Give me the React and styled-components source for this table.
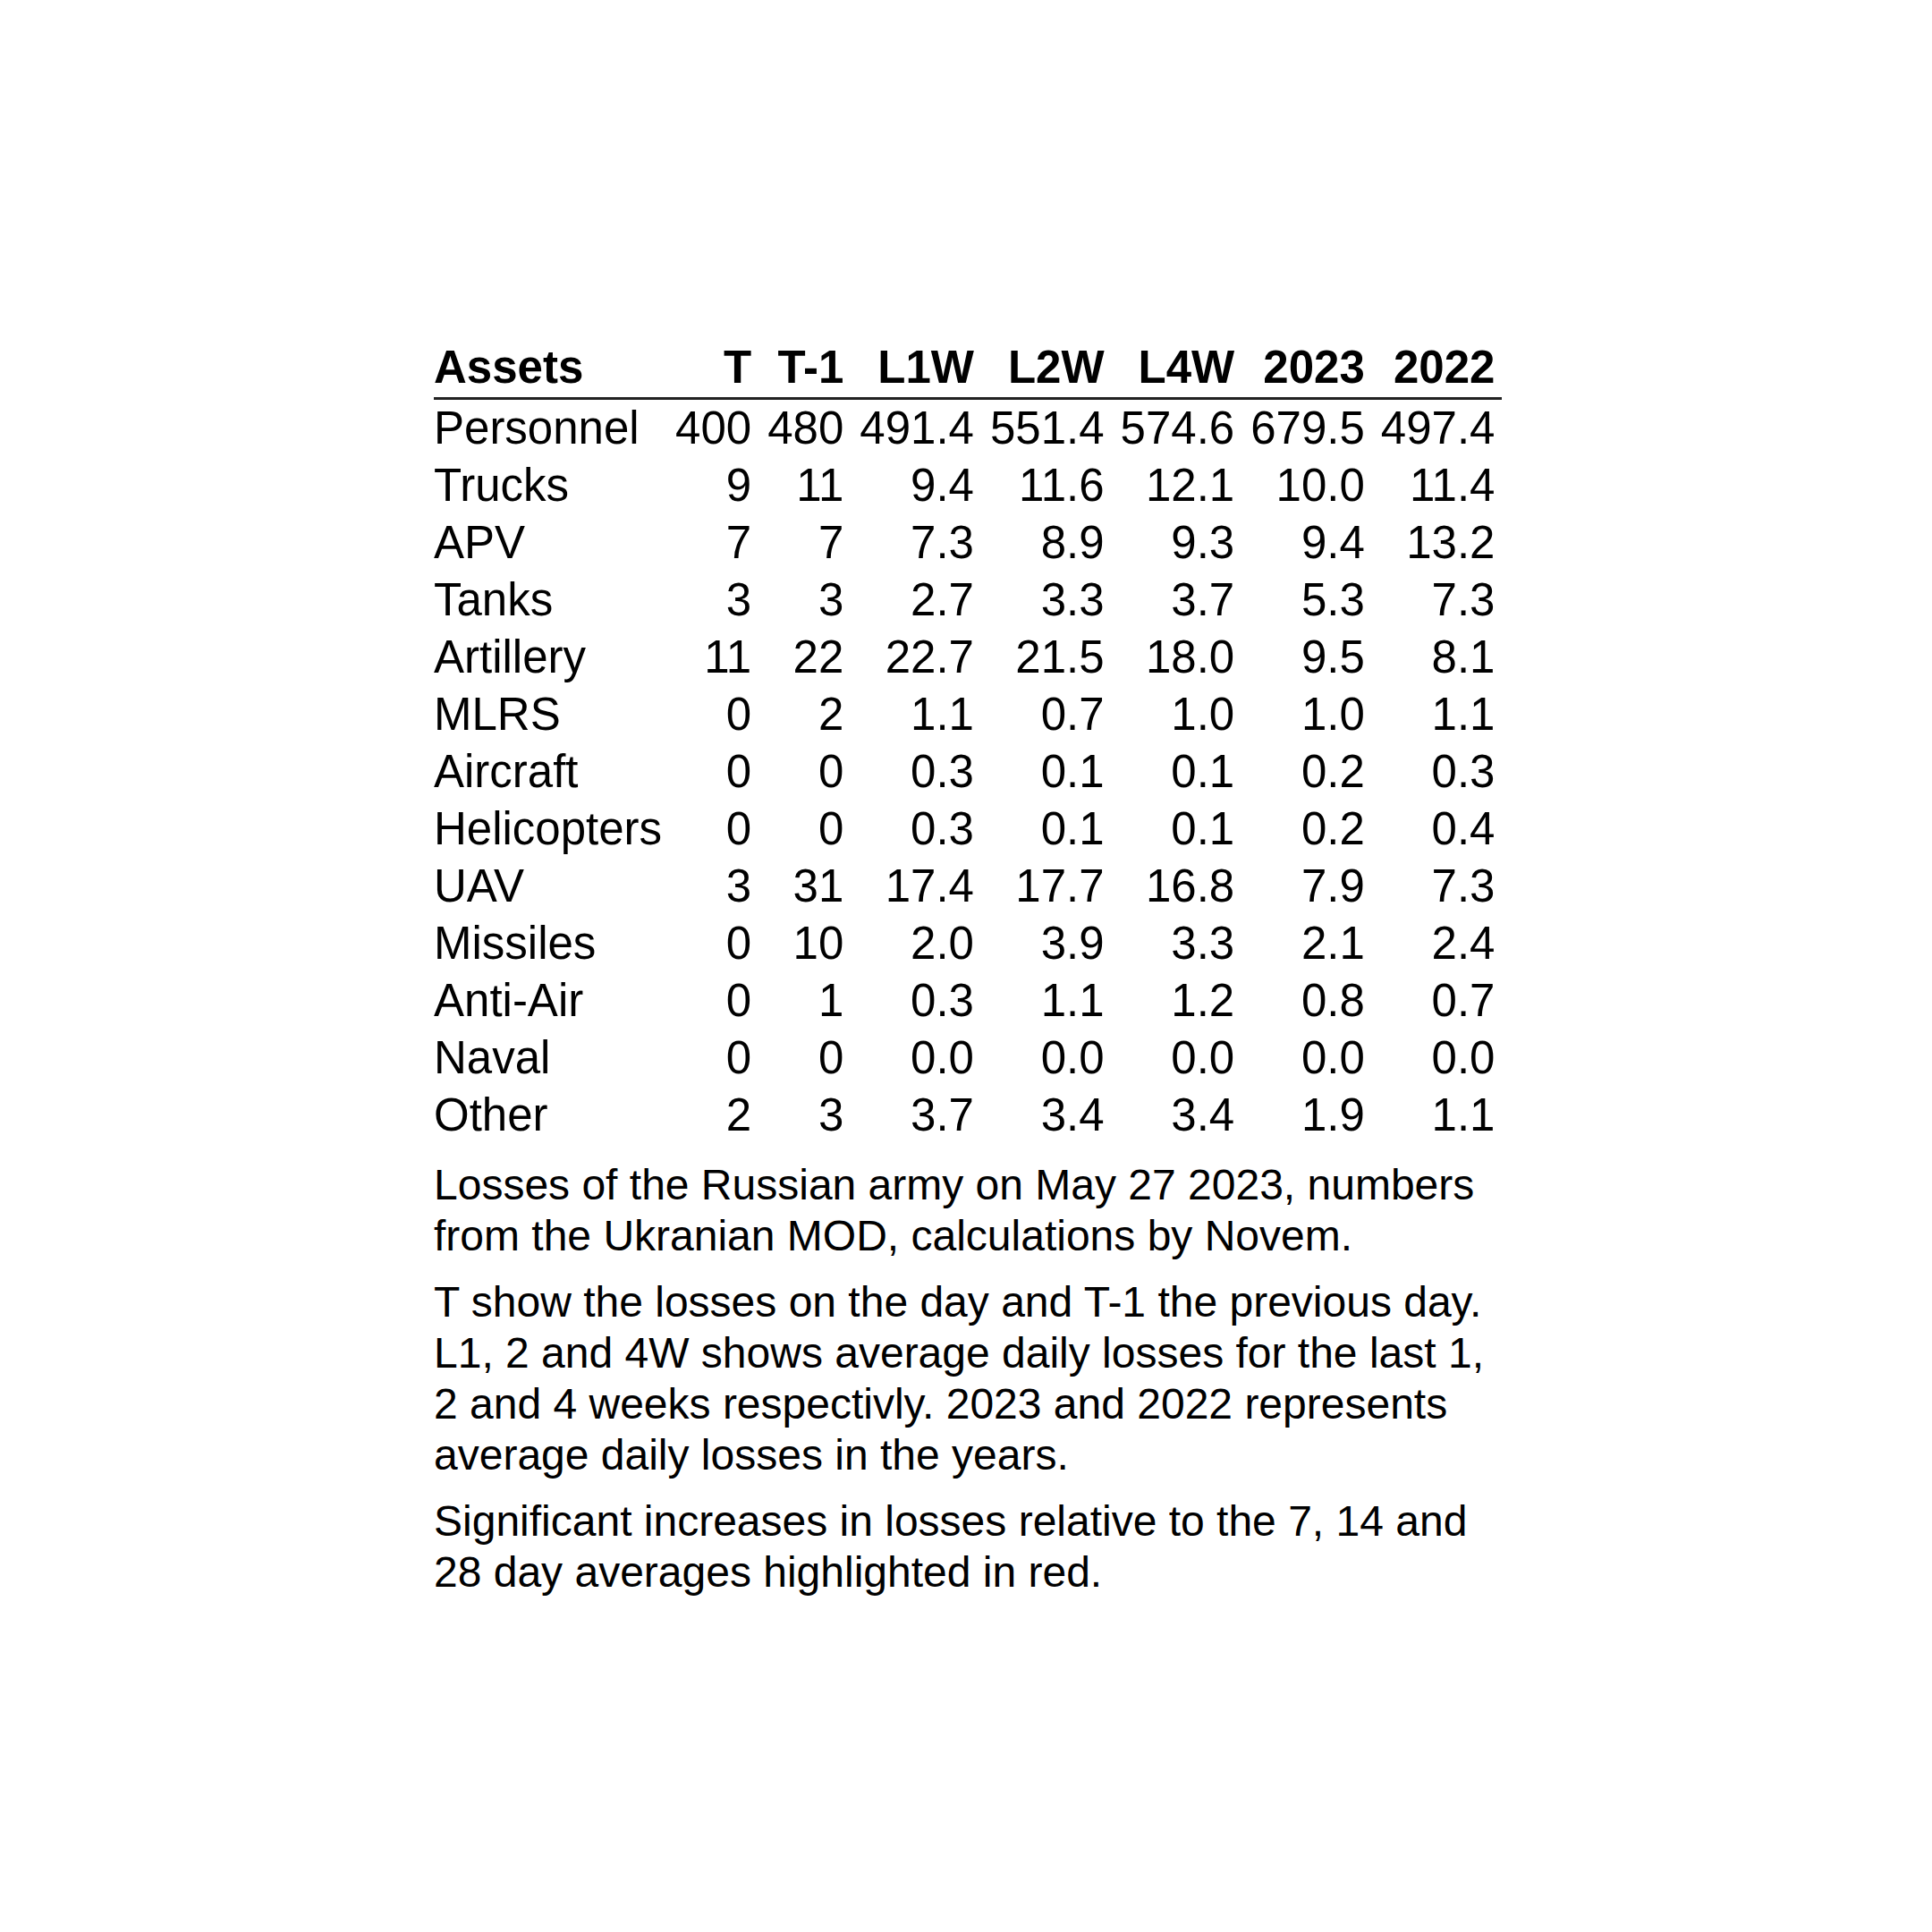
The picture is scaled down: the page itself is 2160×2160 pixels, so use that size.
import styled, { createGlobalStyle } from "styled-components";

const GlobalStyle = createGlobalStyle`
    html, body {
        margin: 0;
        padding: 0;
        background: #ffffff;
    }
    body {
        font-family: "Liberation Sans", Arial, sans-serif;
        color: #000000;
    }
`;

const columns = ["T", "T-1", "L1W", "L2W", "L4W", "2023", "2022"];

const rows = [
    ["Personnel", "400", "480", "491.4", "551.4", "574.6", "679.5", "497.4"],
    ["Trucks", "9", "11", "9.4", "11.6", "12.1", "10.0", "11.4"],
    ["APV", "7", "7", "7.3", "8.9", "9.3", "9.4", "13.2"],
    ["Tanks", "3", "3", "2.7", "3.3", "3.7", "5.3", "7.3"],
    ["Artillery", "11", "22", "22.7", "21.5", "18.0", "9.5", "8.1"],
    ["MLRS", "0", "2", "1.1", "0.7", "1.0", "1.0", "1.1"],
    ["Aircraft", "0", "0", "0.3", "0.1", "0.1", "0.2", "0.3"],
    ["Helicopters", "0", "0", "0.3", "0.1", "0.1", "0.2", "0.4"],
    ["UAV", "3", "31", "17.4", "17.7", "16.8", "7.9", "7.3"],
    ["Missiles", "0", "10", "2.0", "3.9", "3.3", "2.1", "2.4"],
    ["Anti-Air", "0", "1", "0.3", "1.1", "1.2", "0.8", "0.7"],
    ["Naval", "0", "0", "0.0", "0.0", "0.0", "0.0", "0.0"],
    ["Other", "2", "3", "3.7", "3.4", "3.4", "1.9", "1.1"],
];

function App() {
    return (
        <Page>
            <GlobalStyle />
            <Figure>
                <Table>
                    <thead>
                        <tr>
                            <HeadCell $label>Assets</HeadCell>
                            {columns.map(col => (
                                <HeadCell key={col}>{col}</HeadCell>
                            ))}
                        </tr>
                    </thead>
                    <tbody>
                        {rows.map(row => (
                            <tr key={row[0]}>
                                {row.map((value, index) => (
                                    <Cell key={index} $label={index === 0}>
                                        {value}
                                    </Cell>
                                ))}
                            </tr>
                        ))}
                    </tbody>
                </Table>
                <Notes>
                    <Note>
                        Losses of the Russian army on May 27 2023, numbers<br />
                        from the Ukranian MOD, calculations by Novem.
                    </Note>
                    <Note>
                        T show the losses on the day and T-1 the previous day.<br />
                        L1, 2 and 4W shows average daily losses for the last 1,<br />
                        2 and 4 weeks respectivly. 2023 and 2022 represents<br />
                        average daily losses in the years.
                    </Note>
                    <Note>
                        Significant increases in losses relative to the 7, 14 and<br />
                        28 day averages highlighted in red.
                    </Note>
                </Notes>
            </Figure>
        </Page>
    );
}

export default App;

const Page = styled.div`
    width: 2160px;
    min-height: 2160px;
    box-sizing: border-box;
    padding: 379px 0 0 485px;
`;

const Figure = styled.div`
    display: inline-flex;
    flex-direction: column;
    gap: 17px;
`;

const Table = styled.table`
    border-collapse: collapse;
    font-size: 51px;
    line-height: 64px;
`;

const HeadCell = styled.th`
    padding: 0 9px 1px 9px;
    font-weight: 700;
    text-align: ${props => props.$label ? "left" : "right"};
    white-space: nowrap;
    border-bottom: 3px solid #222222;

    &:first-child {
        padding-left: 0;
        padding-right: 6px;
    }

    &:last-child {
        padding-right: 8px;
    }
`;

const Cell = styled.td`
    padding: 0 9px;
    font-weight: 400;
    text-align: ${props => props.$label ? "left" : "right"};
    white-space: nowrap;

    &:first-child {
        padding-left: 0;
        padding-right: 6px;
    }

    &:last-child {
        padding-right: 8px;
    }
`;

const Notes = styled.div`
    display: flex;
    flex-direction: column;
    gap: 17px;
`;

const Note = styled.p`
    margin: 0;
    font-size: 48px;
    line-height: 57px;
    white-space: nowrap;
`;
